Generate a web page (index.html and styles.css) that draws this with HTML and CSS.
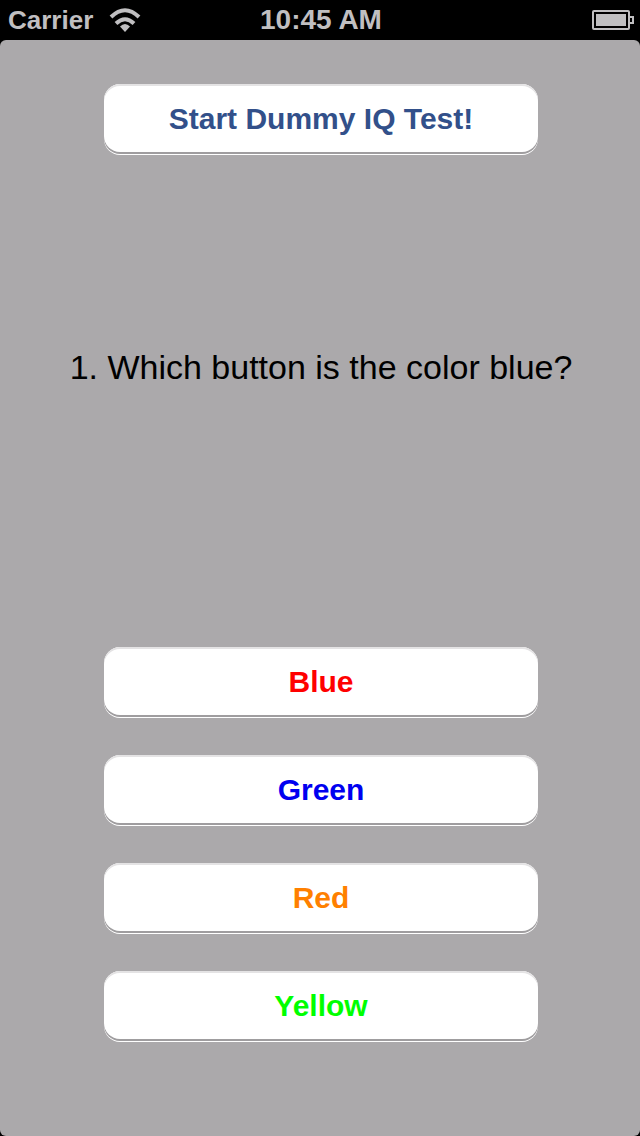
FILE: index.html
```html
<!DOCTYPE html>
<html lang="en">

<head>
    <meta charset="utf-8">
    <title>Dummy IQ Test</title>
    <meta name="viewport" content="width=device-width, initial-scale=1">
    <link rel="stylesheet" href="styles.css">
</head>

<body>
    <header class="status_bar">
        <div class="carrier">
            <span>Carrier</span>
            <svg class="wifi" width="32" height="24" viewBox="0 0 32 24" aria-hidden="true">
                <path d="M2 9 Q16 -4.5 30 9" fill="none" stroke="#c0bfc1" stroke-width="4" />
                <path d="M7 15.5 Q16 7 25 15.5" fill="none" stroke="#c0bfc1" stroke-width="4" />
                <path d="M11 18.5 Q16 13.5 21 18.5 L16 24 Z" fill="#c0bfc1" />
            </svg>
        </div>
        <div class="time">10:45 AM</div>
        <svg class="battery" width="42" height="20" viewBox="0 0 42 20" aria-hidden="true">
            <rect x="1" y="1" width="36" height="18" rx="1" fill="none" stroke="#c0bfc1" stroke-width="2" />
            <rect x="4" y="4" width="30" height="12" fill="#c0bfc1" />
            <path d="M38 7 H41 V13 H38" fill="none" stroke="#c0bfc1" stroke-width="2" />
        </svg>
    </header>
    <main class="container">
        <button type="button" class="btn btn_start">Start Dummy IQ Test!</button>
        <p class="question">1. Which button is the color blue?</p>
        <div class="answers">
            <button type="button" class="btn red">Blue</button>
            <button type="button" class="btn blue">Green</button>
            <button type="button" class="btn orange">Red</button>
            <button type="button" class="btn green">Yellow</button>
        </div>
    </main>
</body>

</html>
```
FILE: styles.css
```css
* {
    margin: 0;
    padding: 0;
    box-sizing: border-box;
}

body {
    display: flex;
    flex-direction: column;
    min-height: 100vh;
    background-color: black;
    font-family: "Liberation Sans", Arial, sans-serif;
}

.status_bar {
    display: grid;
    grid-template-columns: 1fr auto 1fr;
    align-items: center;
    height: 40px;
    padding: 0 6px 0 8px;
    color: #c0bfc1;
    font-size: 26px;
    font-weight: bold;
}

.carrier {
    display: flex;
    align-items: center;
    gap: 16px;
}

.time {
    font-size: 28px;
}

.battery {
    justify-self: end;
}

.container {
    flex: 1;
    display: flex;
    flex-direction: column;
    padding: 44px 102px 97px 104px;
    border-radius: 6px;
    background-color: #aba9ab;
}

.btn {
    width: 100%;
    height: 68px;
    padding-top: 2px;
    border: none;
    border-radius: 16px;
    background-color: white;
    box-shadow: inset 0 2px 0 #e4e3e4, 0 2px 0 #9f9d9f, 0 3px 0 white;
    font-family: inherit;
    font-size: 30px;
    font-weight: bold;
}

.btn:active {
    background-color: #e4e3e4;
}

.btn_start {
    color: #32508a;
}

.question {
    margin: 195px -60px auto;
    text-align: center;
    font-size: 34px;
    line-height: 40px;
}

.answers {
    display: grid;
    gap: 40px;
}

.red {
    color: #ff0000;
}

.blue {
    color: #0000f0;
}

.orange {
    color: #ff8000;
}

.green {
    color: #00ff00;
}
```
